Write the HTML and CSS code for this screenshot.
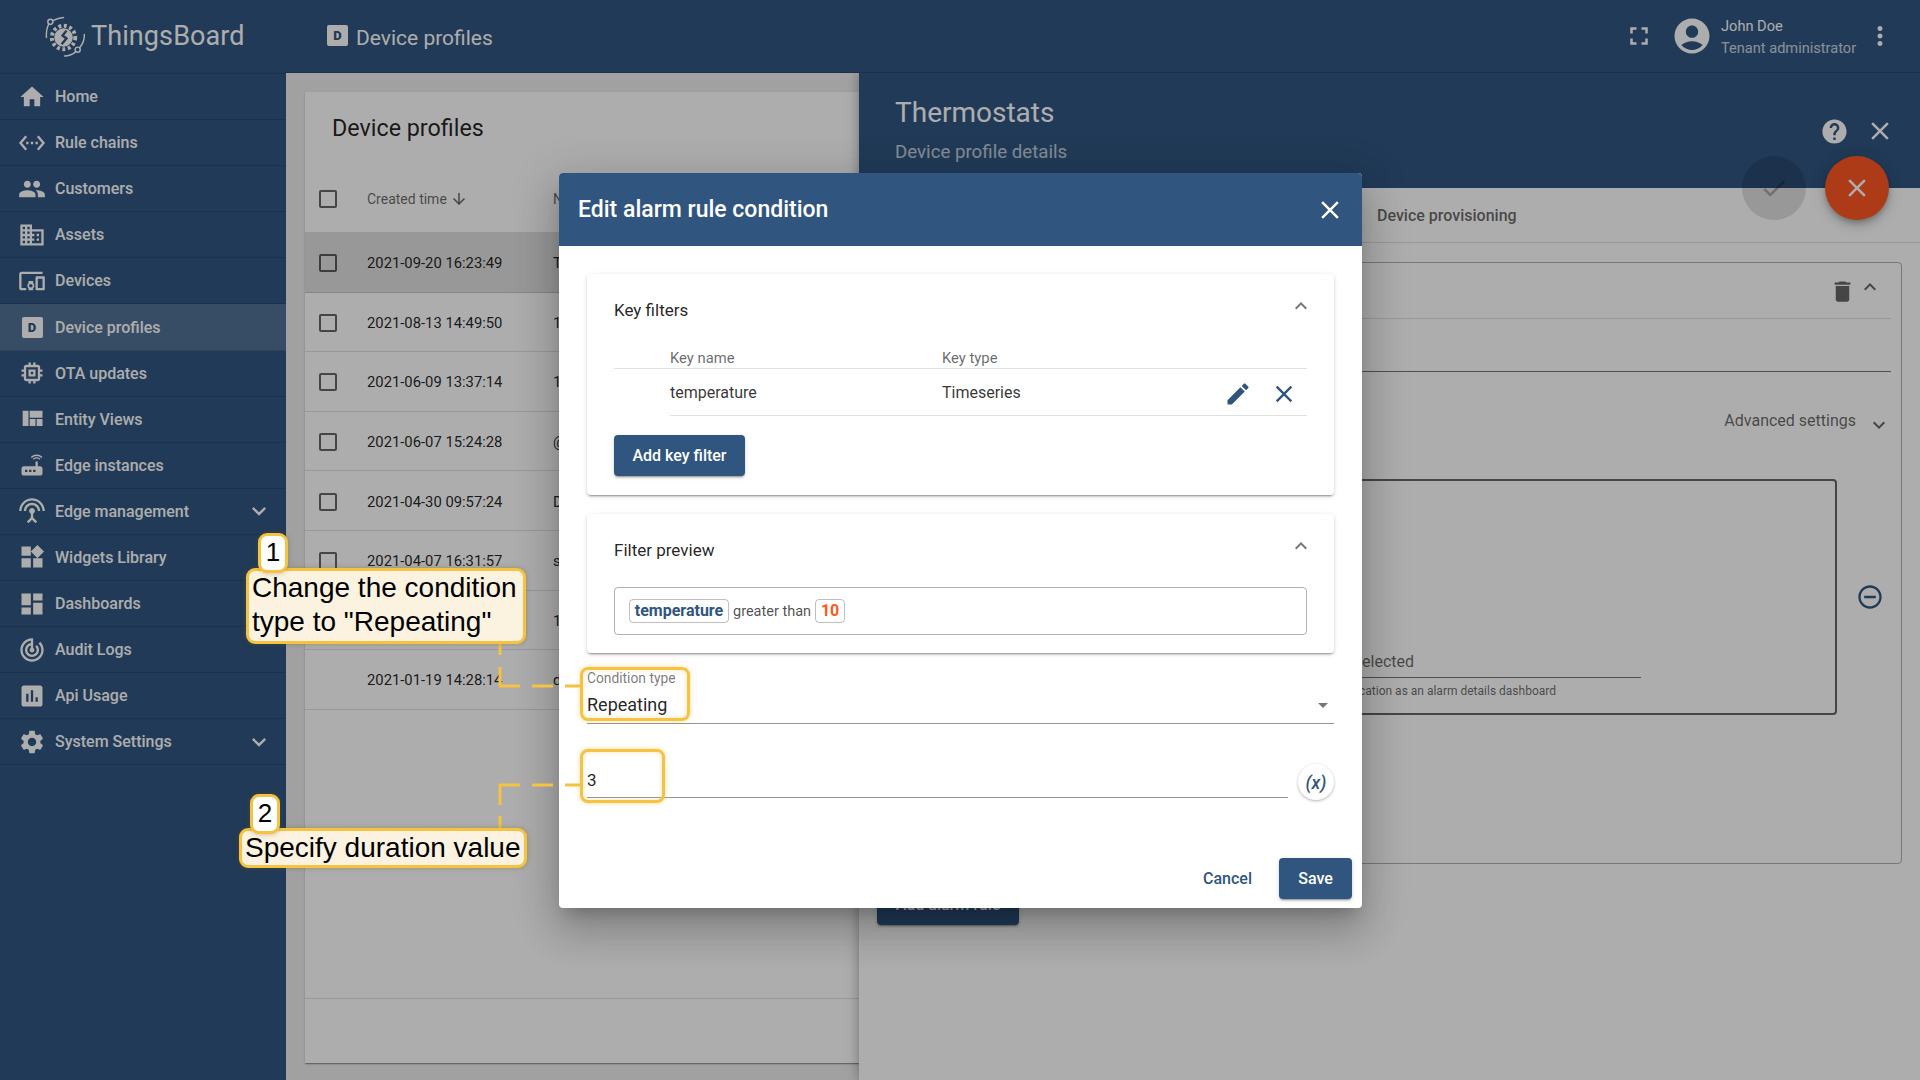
FILE: index.html
```html
<!DOCTYPE html>
<html lang="en">
<head>
    <meta charset="UTF-8">
    <title>ThingsBoard - Device profiles</title>
    <link rel="stylesheet" href="styles.css">
</head>
<body>
<div class="app">
    <aside class="sidebar">
        <div class="logo">
            <svg class="logo-mark" viewBox="0 0 42 42">
                <circle cx="19" cy="22" r="9.5" fill="#fff"/>
                <circle cx="19" cy="22" r="12" fill="none" stroke="#fff" stroke-width="4" stroke-dasharray="3 2.65"/>
                <path d="M22 15l-4 5 4 3-5 6" fill="none" stroke="#305680" stroke-width="2.4"/>
                <g fill="none" stroke="#fff" stroke-width="1.5" stroke-linecap="round">
                    <path d="M1.5 22C1 16 2.500 11 3.800 8.200"/>
                    <circle cx="5.500" cy="6" r="2.600"/>
                    <path d="M8 4.800C11.500 3 15 1.800 19 1.500"/>
                    <path d="M20 41C24 41 28 39.500 31 37"/>
                    <circle cx="33.500" cy="34.500" r="2.600"/>
                    <path d="M35.500 32.500C38.500 29 40.500 24 40.300 19"/>
                </g>
            </svg>
            <span class="logo-text">ThingsBoard</span>
        </div>
        <nav class="nav">
            <a class="nav-item"><svg class="icon" viewBox="0 0 24 24"><path d="M10 20v-6h4v6h5v-8h3L12 3 2 12h3v8z"/></svg>Home</a>
            <a class="nav-item"><svg class="icon" viewBox="0 0 24 24"><path d="M7.770 6.760L6.230 5.480.82 12l5.410 6.520 1.540-1.280L3.420 12l4.350-5.240zM7 13h2v-2H7v2zm10-2h-2v2h2v-2zm-6 2h2v-2h-2v2zm6.770-7.520l-1.540 1.280L20.580 12l-4.350 5.240 1.540 1.280L23.180 12l-5.410-6.520z"/></svg>Rule chains</a>
            <a class="nav-item"><svg class="icon" viewBox="0 0 24 24"><path d="M16 11c1.660 0 2.990-1.340 2.990-3S17.660 5 16 5c-1.660 0-3 1.340-3 3s1.340 3 3 3zm-8 0c1.660 0 2.990-1.340 2.990-3S9.660 5 8 5C6.340 5 5 6.340 5 8s1.340 3 3 3zm0 2c-2.330 0-7 1.170-7 3.500V19h14v-2.500c0-2.330-4.670-3.500-7-3.500zm8 0c-.29 0-.62.02-.97.05 1.160.84 1.970 1.970 1.970 3.450V19h6v-2.500c0-2.330-4.670-3.500-7-3.500z"/></svg>Customers</a>
            <a class="nav-item"><svg class="icon" viewBox="0 0 24 24"><path d="M12 7V3H2v18h20V7H12zM6 19H4v-2h2v2zm0-4H4v-2h2v2zm0-4H4V9h2v2zm0-4H4V5h2v2zm4 12H8v-2h2v2zm0-4H8v-2h2v2zm0-4H8V9h2v2zm0-4H8V5h2v2zm10 12h-8v-2h2v-2h-2v-2h2v-2h-2V9h8v10zm-2-8h-2v2h2v-2zm0 4h-2v2h2v-2z"/></svg>Assets</a>
            <a class="nav-item"><svg class="icon" viewBox="0 0 24 24"><path d="M3 6h18V4H3c-1.100 0-2 .9-2 2v12c0 1.100.9 2 2 2h4v-2H3V6zm10 6H9v1.780c-.61.55-1 1.330-1 2.220s.39 1.670 1 2.220V20h4v-1.780c.61-.55 1-1.340 1-2.220s-.39-1.670-1-2.220V12zm-2 5.500c-.83 0-1.500-.67-1.500-1.500s.67-1.500 1.500-1.500 1.500.67 1.500 1.500-.67 1.500-1.500 1.500zM22 8h-6c-.5 0-1 .5-1 1v10c0 .5.5 1 1 1h6c.5 0 1-.5 1-1V9c0-.5-.5-1-1-1zm-1 10h-4v-8h4v8z"/></svg>Devices</a>
            <a class="nav-item active"><span class="nav-d"><span class="d-tile">D</span></span>Device profiles</a>
            <a class="nav-item"><svg class="icon" viewBox="0 0 24 24"><path d="M15 9H9v6h6V9zm-2 4h-2v-2h2v2zm8-2V9h-2V7c0-1.100-.9-2-2-2h-2V3h-2v2h-2V3H9v2H7c-1.100 0-2 .9-2 2v2H3v2h2v2H3v2h2v2c0 1.100.9 2 2 2h2v2h2v-2h2v2h2v-2h2c1.100 0 2-.9 2-2v-2h2v-2h-2v-2h2zm-4 6H7V7h10v10z"/></svg>OTA updates</a>
            <a class="nav-item"><svg class="icon" viewBox="0 0 24 24"><path d="M10 18h5v-6h-5v6zm-6 0h5V5H4v13zm12 0h5v-6h-5v6zM10 5v6h11V5H10z"/></svg>Entity Views</a>
            <a class="nav-item"><svg class="icon" viewBox="0 0 24 24"><path d="M20.200 5.900l.8-.8C19.600 3.700 17.800 3 16 3s-3.600.7-5 2.100l.8.8C13 4.800 14.500 4.200 16 4.200s3 .6 4.200 1.700zm-.9.8c-.9-.9-2.100-1.400-3.300-1.400s-2.400.5-3.300 1.400l.8.8c.7-.7 1.600-1 2.500-1 .9 0 1.800.3 2.500 1l.8-.8zM19 13h-2V9h-2v4H5c-1.100 0-2 .9-2 2v4c0 1.100.9 2 2 2h14c1.100 0 2-.9 2-2v-4c0-1.100-.9-2-2-2zM8 18H6v-2h2v2zm3.500 0h-2v-2h2v2zm3.500 0h-2v-2h2v2z"/></svg>Edge instances</a>
            <a class="nav-item"><svg class="icon" viewBox="0 0 24 24"><path d="M12 5c-3.870 0-7 3.130-7 7h2c0-2.760 2.240-5 5-5s5 2.240 5 5h2c0-3.870-3.130-7-7-7zm1 9.290c.88-.39 1.500-1.260 1.500-2.290 0-1.380-1.120-2.500-2.500-2.500S9.500 10.620 9.500 12c0 1.020.62 1.900 1.500 2.290v3.300L7.590 21 9 22.410l3-3 3 3L16.410 21 13 17.590v-3.300zM12 1C5.930 1 1 5.930 1 12h2c0-4.970 4.030-9 9-9s9 4.030 9 9h2c0-6.070-4.930-11-11-11z"/></svg>Edge management<svg class="icon nav-arrow" viewBox="0 0 24 24"><path d="M16.590 8.590L12 13.170 7.410 8.590 6 10l6 6 6-6z"/></svg></a>
            <a class="nav-item"><svg class="icon" viewBox="0 0 24 24"><path d="M13 13v8h8v-8h-8zM3 21h8v-8H3v8zM3 3v8h8V3H3zm13.660-1.310L11 7.340 16.660 13l5.660-5.660-5.660-5.650z"/></svg>Widgets Library</a>
            <a class="nav-item"><svg class="icon" viewBox="0 0 24 24"><path d="M3 13h8V3H3v10zm0 8h8v-6H3v6zm10 0h8V11h-8v10zm0-18v6h8V3h-8z"/></svg>Dashboards</a>
            <a class="nav-item"><svg class="icon" viewBox="0 0 24 24"><path d="M19.070 4.930l-1.410 1.410C19.100 7.790 20 9.790 20 12c0 4.420-3.580 8-8 8s-8-3.580-8-8c0-4.080 3.050-7.440 7-7.930v2.020C8.160 6.570 6 9.030 6 12c0 3.310 2.690 6 6 6s6-2.690 6-6c0-1.660-.67-3.160-1.760-4.240l-1.410 1.410C15.550 9.900 16 10.900 16 12c0 2.210-1.790 4-4 4s-4-1.790-4-4c0-1.860 1.280-3.410 3-3.860v2.140c-.6.35-1 .98-1 1.720 0 1.100.9 2 2 2s2-.9 2-2c0-.74-.4-1.380-1-1.720V2h-1C6.480 2 2 6.480 2 12s4.480 10 10 10 10-4.480 10-10c0-2.760-1.120-5.260-2.930-7.070z"/></svg>Audit Logs</a>
            <a class="nav-item"><svg class="icon" viewBox="0 0 24 24"><path d="M19 3H5c-1.100 0-2 .9-2 2v14c0 1.100.9 2 2 2h14c1.100 0 2-.9 2-2V5c0-1.100-.9-2-2-2zM9 17H7v-7h2v7zm4 0h-2V7h2v10zm4 0h-2v-4h2v4z"/></svg>Api Usage</a>
            <a class="nav-item"><svg class="icon" viewBox="0 0 24 24"><path d="M19.140 12.940c.04-.3.06-.61.06-.94 0-.32-.02-.64-.07-.94l2.030-1.580c.18-.14.23-.41.12-.61l-1.920-3.320c-.12-.22-.37-.29-.59-.22l-2.390.96c-.5-.38-1.030-.7-1.620-.94l-.36-2.540c-.04-.24-.24-.41-.48-.41h-3.840c-.24 0-.43.17-.47.41l-.36 2.540c-.59.24-1.130.57-1.620.94l-2.390-.96c-.22-.08-.47 0-.59.22L2.740 8.870c-.12.21-.08.47.12.61l2.030 1.580c-.05.3-.09.63-.09.94s.02.64.07.94l-2.030 1.580c-.18.14-.23.41-.12.61l1.920 3.320c.12.22.37.29.59.22l2.390-.96c.5.38 1.030.7 1.620.94l.36 2.540c.05.24.24.41.48.41h3.840c.24 0 .44-.17.47-.41l.36-2.540c.59-.24 1.130-.56 1.620-.94l2.390.96c.22.08.47 0 .59-.22l1.920-3.320c.12-.22.07-.47-.12-.61l-2.010-1.580zM12 15.600c-1.980 0-3.600-1.620-3.600-3.600s1.620-3.600 3.600-3.600 3.600 1.620 3.600 3.600-1.620 3.600-3.600 3.600z"/></svg>System Settings<svg class="icon nav-arrow" viewBox="0 0 24 24"><path d="M16.590 8.590L12 13.170 7.410 8.590 6 10l6 6 6-6z"/></svg></a>
        </nav>
    </aside>

    <div class="main">
        <header class="topbar">
            <span class="d-tile d-tile-top">D</span>
            <span class="topbar-title">Device profiles</span>
            <div class="topbar-right">
                <svg class="icon icon-30" viewBox="0 0 24 24"><path d="M7 14H5v5h5v-2H7v-3zm-2-4h2V7h3V5H5v5zm12 7h-3v2h5v-5h-2v3zM14 5v2h3v3h2V5h-5z"/></svg>
                <svg class="icon avatar" viewBox="0 0 24 24"><path d="M12 2C6.480 2 2 6.480 2 12s4.480 10 10 10 10-4.480 10-10S17.520 2 12 2zm0 4c1.930 0 3.500 1.570 3.500 3.500S13.930 13 12 13s-3.500-1.570-3.500-3.500S10.070 6 12 6zm0 14c-2.030 0-4.430-.82-6.140-2.880C7.550 15.800 9.680 15 12 15s4.450.8 6.140 2.120C16.430 19.180 14.030 20 12 20z"/></svg>
                <div class="user">
                    <div class="user-name">John Doe</div>
                    <div class="user-role">Tenant administrator</div>
                </div>
                <svg class="icon icon-30" viewBox="0 0 24 24"><path d="M12 8c1.100 0 2-.9 2-2s-.9-2-2-2-2 .9-2 2 .9 2 2 2zm0 2c-1.100 0-2 .9-2 2s.9 2 2 2 2-.9 2-2-.9-2-2-2zm0 6c-1.100 0-2 .9-2 2s.9 2 2 2 2-.9 2-2-.9-2-2-2z"/></svg>
            </div>
        </header>

        <div class="content">
            <section class="list-area">
                <div class="list-card">
                    <h2 class="list-title">Device profiles</h2>
                    <div class="row row-head">
                        <span class="checkbox"></span>
                        <span class="cell-time">Created time <svg class="sort" viewBox="0 0 24 24"><path d="M20 12l-1.410-1.410L13 16.170V4h-2v12.170l-5.580-5.590L4 12l8 8 8-8z"/></svg></span>
                        <span class="cell-name">N</span>
                    </div>
                    <div class="row selected"><span class="checkbox"></span><span class="cell-time">2021-09-20 16:23:49</span><span class="cell-name">T</span></div>
                    <div class="row"><span class="checkbox"></span><span class="cell-time">2021-08-13 14:49:50</span><span class="cell-name">1</span></div>
                    <div class="row"><span class="checkbox"></span><span class="cell-time">2021-06-09 13:37:14</span><span class="cell-name">1</span></div>
                    <div class="row"><span class="checkbox"></span><span class="cell-time">2021-06-07 15:24:28</span><span class="cell-name">@</span></div>
                    <div class="row"><span class="checkbox"></span><span class="cell-time">2021-04-30 09:57:24</span><span class="cell-name">D</span></div>
                    <div class="row"><span class="checkbox"></span><span class="cell-time">2021-04-07 16:31:57</span><span class="cell-name">s</span></div>
                    <div class="row"><span class="checkbox"></span><span class="cell-time"></span><span class="cell-name">1</span></div>
                    <div class="row"><span class="checkbox checkbox-off"></span><span class="cell-time">2021-01-19 14:28:14</span><span class="cell-name">d</span></div>
                    <div class="list-footer"></div>
                </div>
            </section>

            <section class="panel">
                <div class="panel-head">
                    <div>
                        <div class="panel-title">Thermostats</div>
                        <div class="panel-sub">Device profile details</div>
                    </div>
                    <div class="panel-actions">
                        <svg class="icon help" viewBox="0 0 24 24"><path d="M12 2C6.480 2 2 6.480 2 12s4.480 10 10 10 10-4.480 10-10S17.520 2 12 2zm1 17h-2v-2h2v2zm2.070-7.750l-.9.92C13.450 12.900 13 13.500 13 15h-2v-.5c0-1.100.45-2.100 1.170-2.830l1.240-1.260c.37-.36.59-.86.59-1.410 0-1.100-.9-2-2-2s-2 .9-2 2H8c0-2.210 1.790-4 4-4s4 1.790 4 4c0 .88-.36 1.680-.93 2.250z"/></svg>
                        <svg class="icon icon-30" viewBox="0 0 24 24"><path d="M19 6.410L17.590 5 12 10.590 6.410 5 5 6.410 10.590 12 5 17.590 6.410 19 12 13.410 17.590 19 19 17.590 13.410 12z"/></svg>
                    </div>
                </div>
                <div class="fabs">
                    <span class="fab fab-off"><svg class="icon" viewBox="0 0 24 24"><path d="M9 16.170L4.830 12l-1.420 1.410L9 19 21 7l-1.410-1.410z"/></svg></span>
                    <span class="fab fab-close"><svg class="icon" viewBox="0 0 24 24"><path d="M19 6.410L17.590 5 12 10.590 6.410 5 5 6.410 10.590 12 5 17.590 6.410 19 12 13.410 17.590 19 19 17.590 13.410 12z"/></svg></span>
                </div>
                <div class="tabs"><span class="tab">Device provisioning</span></div>
                <div class="panel-body">
                    <div class="rule-box">
                        <div class="rule-head">
                            <svg class="icon trash" viewBox="0 0 24 24"><path d="M6 19c0 1.100.9 2 2 2h8c1.100 0 2-.9 2-2V7H6v12zM19 4h-3.500l-1-1h-5l-1 1H5v2h14V4z"/></svg>
                            <svg class="icon chevron" viewBox="0 0 24 24"><path d="M12 8l-6 6 1.410 1.410L12 10.830l4.590 4.580L18 14z"/></svg>
                        </div>
                        <div class="rule-field"></div>
                        <div class="advanced">Advanced settings<svg class="icon chevron" viewBox="0 0 24 24"><path d="M16.590 8.590L12 13.170 7.410 8.590 6 10l6 6 6-6z"/></svg></div>
                        <div class="rule-row">
                            <div class="rule-inner">
                                <div class="dash-field">No dashboard selected</div>
                                <div class="dash-hint">Dashboard used for the notification as an alarm details dashboard</div>
                            </div>
                            <svg class="icon minus" viewBox="0 0 24 24"><path d="M7 11v2h10v-2H7zm5-9C6.480 2 2 6.480 2 12s4.480 10 10 10 10-4.480 10-10S17.520 2 12 2zm0 18c-4.410 0-8-3.590-8-8s3.590-8 8-8 8 3.590 8 8-3.590 8-8 8z"/></svg>
                        </div>
                    </div>
                    <div class="btn add-alarm">Add alarm rule</div>
                </div>
            </section>
        </div>
    </div>
</div>

<div class="backdrop"></div>

<div class="dialog">
    <div class="dialog-head">
        <span class="dialog-title">Edit alarm rule condition</span>
        <svg class="icon icon-30" viewBox="0 0 24 24"><path d="M19 6.410L17.590 5 12 10.590 6.410 5 5 6.410 10.590 12 5 17.590 6.410 19 12 13.410 17.590 19 19 17.590 13.410 12z"/></svg>
    </div>
    <div class="dialog-body">
        <div class="card card-keys">
            <div class="card-head">
                <span>Key filters</span>
                <svg class="icon chevron" viewBox="0 0 24 24"><path d="M12 8l-6 6 1.410 1.410L12 10.830l4.590 4.580L18 14z"/></svg>
            </div>
            <div class="key-head"><span class="key-col1">Key name</span><span>Key type</span></div>
            <div class="key-row">
                <span class="key-name">temperature</span>
                <span class="key-type">Timeseries</span>
                <svg class="icon key-btn" viewBox="0 0 24 24"><path d="M3 17.250V21h3.750L17.810 9.940l-3.750-3.750L3 17.250zM20.710 7.040c.39-.39.39-1.020 0-1.410l-2.340-2.340c-.39-.39-1.020-.39-1.410 0l-1.830 1.830 3.750 3.750 1.830-1.830z"/></svg>
                <svg class="icon key-btn" viewBox="0 0 24 24"><path d="M19 6.410L17.590 5 12 10.590 6.410 5 5 6.410 10.590 12 5 17.590 6.410 19 12 13.410 17.590 19 19 17.590 13.410 12z"/></svg>
            </div>
            <div class="btn add-key">Add key filter</div>
        </div>
        <div class="card card-preview">
            <div class="card-head">
                <span>Filter preview</span>
                <svg class="icon chevron" viewBox="0 0 24 24"><path d="M12 8l-6 6 1.410 1.410L12 10.830l4.590 4.580L18 14z"/></svg>
            </div>
            <div class="preview">
                <span class="chip chip-key">temperature</span>
                <span class="preview-op">greater than</span>
                <span class="chip chip-val">10</span>
            </div>
        </div>
        <div class="field field-select">
            <div class="field-label">Condition type</div>
            <div class="field-value">Repeating</div>
            <span class="select-arrow"></span>
        </div>
        <div class="duration">
            <div class="field field-input"><div class="field-value">3</div></div>
            <span class="var-btn">(x)</span>
        </div>
    </div>
    <div class="dialog-actions">
        <span class="btn-text">Cancel</span>
        <span class="btn save">Save</span>
    </div>
</div>

<!-- annotations on top of the screenshot -->
<svg class="anno-lines" viewBox="0 0 1920 1080">
    <path d="M500 644V655M500 667V686H520M532 686H553M565 686H581"/>
    <path d="M500 829V816M500 805V785H520M532 785H553M565 785H581"/>
</svg>
<div class="anno-mark anno-mark-1"></div>
<div class="anno-mark anno-mark-2"></div>
<div class="anno-num anno-num-1">1</div>
<div class="anno-text anno-text-1">Change the condition<br>type to "Repeating"</div>
<div class="anno-num anno-num-2">2</div>
<div class="anno-text anno-text-2">Specify duration value</div>
</body>
</html>
```

FILE: styles.css
```css
* {
    box-sizing: border-box;
}

body {
    margin: 0;
    width: 1920px;
    height: 1080px;
    overflow: hidden;
    position: relative;
    background: #eeeeee;
    font-family: Roboto, "Liberation Sans", sans-serif;
    color: rgba(0, 0, 0, 0.87);
}

.icon {
    width: 24px;
    height: 24px;
    fill: currentColor;
    flex: none;
    display: block;
}

.icon-30 {
    width: 30px;
    height: 30px;
}

.app {
    display: flex;
    height: 1080px;
}

/* sidebar */
.sidebar {
    width: 286px;
    flex: none;
    background: #305680;
    color: #fff;
    z-index: 2;
}

.logo {
    height: 73px;
    display: flex;
    align-items: center;
    padding-left: 45px;
    gap: 5px;
}

.logo-mark {
    width: 41px;
    height: 41px;
    margin-top: -1px;
    flex: none;
}

.logo-text {
    font-size: 27px;
    font-weight: 400;
    letter-spacing: 0.1px;
    margin-top: -1px;
}

.nav {
    border-top: 1px solid rgba(0, 0, 0, 0.12);
}

.nav-item {
    height: 46.1px;
    display: flex;
    align-items: center;
    padding: 0 13px 0 18px;
    gap: 9px;
    font-size: 16px;
    font-weight: 500;
    border-bottom: 1px solid rgba(0, 0, 0, 0.12);
}

.nav-item .icon {
    width: 28px;
    height: 28px;
}

.nav-item.active {
    background: rgba(255, 255, 255, 0.17);
}

.nav-item .nav-arrow {
    margin-left: auto;
}

.nav-d {
    width: 28px;
    display: flex;
    justify-content: center;
}

.d-tile {
    width: 21px;
    height: 21px;
    border-radius: 2px;
    background: #fff;
    color: #305680;
    font-size: 13px;
    font-weight: 900;
    line-height: 21px;
    text-align: center;
    display: block;
}

/* top bar */
.main {
    flex: 1;
    min-width: 0;
    display: flex;
    flex-direction: column;
}

.topbar {
    height: 73px;
    flex: none;
    background: #305680;
    color: #fff;
    display: flex;
    align-items: center;
    padding: 0 25px 0 41px;
    border-bottom: 1px solid rgba(0, 0, 0, 0.15);
    z-index: 1;
}

.d-tile-top {
    margin-right: 8px;
    margin-top: -2px;
}

.topbar-title {
    font-size: 21px;
    margin-top: 3px;
}

.topbar-right {
    margin-left: auto;
    display: flex;
    align-items: center;
}

.avatar {
    width: 42px;
    height: 42px;
    margin: 0 8px 0 17px;
}

.user {
    width: 144px;
    font-size: 14.6px;
    line-height: 22px;
    padding-top: 1px;
}

.user-role {
    opacity: 0.75;
}

/* list */
.content {
    flex: 1;
    display: flex;
    min-height: 0;
}

.list-area {
    width: 573px;
    flex: none;
    padding: 19px 0 0 19px;
    overflow: hidden;
}

.list-card {
    width: 700px;
    height: 971px;
    background: #fff;
    box-shadow: 0 2px 1px -1px rgba(0, 0, 0, 0.2), 0 1px 1px rgba(0, 0, 0, 0.14), 0 1px 3px rgba(0, 0, 0, 0.12);
    display: flex;
    flex-direction: column;
}

.list-title {
    margin: 0;
    height: 71px;
    padding: 21px 0 0 27px;
    font-size: 23.3px;
    font-weight: 400;
    line-height: 30px;
}

.row {
    height: 59.6px;
    flex: none;
    display: flex;
    align-items: center;
    padding: 2px 0 0 14px;
    font-size: 14.8px;
    border-bottom: 1px solid rgba(0, 0, 0, 0.12);
}

.row-head {
    height: 70px;
    font-size: 14px;
    color: rgba(0, 0, 0, 0.6);
}

.row.selected {
    background: #e0e0e0;
}

.checkbox {
    width: 18px;
    height: 18px;
    border: 2px solid rgba(0, 0, 0, 0.6);
    border-radius: 2px;
    flex: none;
}

.checkbox-off {
    visibility: hidden;
}

.cell-time {
    margin-left: 30px;
    width: 186px;
    display: flex;
    align-items: center;
    gap: 4px;
}

.row-head .cell-time {
    gap: 3px;
}

.sort {
    width: 18px;
    height: 18px;
    fill: currentColor;
}

.list-footer {
    margin-top: 288px;
    border-top: 1px solid rgba(0, 0, 0, 0.12);
}

/* details panel */
.panel {
    flex: 1;
    min-width: 0;
    position: relative;
    background: #fff;
    box-shadow: 0 0 12px rgba(0, 0, 0, 0.35);
}

.panel-head {
    height: 115px;
    background: #305680;
    color: #fff;
    display: flex;
    justify-content: space-between;
    padding: 22px 25px 0 36px;
}

.panel-title {
    font-size: 28px;
    line-height: 36px;
}

.panel-sub {
    font-size: 18.7px;
    line-height: 24px;
    margin-top: 9px;
    opacity: 0.7;
}

.panel-actions {
    display: flex;
    align-items: center;
    gap: 16px;
    height: 32px;
    margin-top: 20px;
}

.help {
    width: 29px;
    height: 29px;
}

.fabs {
    position: absolute;
    top: 83px;
    right: 31px;
    display: flex;
    gap: 19px;
}

.fab {
    width: 64px;
    height: 64px;
    border-radius: 50%;
    display: flex;
    align-items: center;
    justify-content: center;
}

.fab .icon {
    width: 30px;
    height: 30px;
}

.fab-off {
    background: rgba(0, 0, 0, 0.12);
    color: rgba(0, 0, 0, 0.26);
}

.fab-close {
    background: #ff5722;
    color: #fff;
    box-shadow: 0 3px 5px -1px rgba(0, 0, 0, 0.2), 0 6px 10px rgba(0, 0, 0, 0.14), 0 1px 18px rgba(0, 0, 0, 0.12);
}

.tabs {
    height: 55px;
    border-bottom: 1px solid rgba(0, 0, 0, 0.12);
    padding: 0 0 0 518px;
    display: flex;
    align-items: center;
    font-size: 16px;
    font-weight: 500;
    color: rgba(0, 0, 0, 0.6);
}

.panel-body {
    padding: 19px 18px 0;
}

.rule-box {
    height: 602px;
    border: 1px solid rgba(0, 0, 0, 0.3);
    border-radius: 4px;
    padding: 0 10px 0 0;
}

.rule-head {
    height: 56px;
    display: flex;
    justify-content: flex-end;
    align-items: center;
    gap: 2px;
    color: rgba(0, 0, 0, 0.6);
    border-bottom: 1px solid rgba(0, 0, 0, 0.12);
}

.trash {
    width: 27px;
    height: 27px;
    margin-top: 1px;
}

.chevron {
    color: rgba(0, 0, 0, 0.6);
}

.rule-head .chevron {
    margin: -7px 9px 0 0;
}

.rule-field {
    height: 53px;
    border-bottom: 1px solid rgba(0, 0, 0, 0.54);
}

.advanced {
    height: 107px;
    padding-top: 34px;
    display: flex;
    justify-content: flex-end;
    gap: 11px;
    font-size: 16px;
    line-height: 30px;
    color: rgba(0, 0, 0, 0.6);
}

.advanced .chevron {
    margin: 7px 0 0 0;
}

.rule-row {
    display: flex;
    align-items: center;
    height: 236px;
}

.rule-inner {
    width: 959px;
    height: 236px;
    border: 2px solid rgba(0, 0, 0, 0.6);
    border-radius: 4px;
    padding: 167px 0 0 0;
}

.dash-field {
    width: 761px;
    height: 30px;
    border-bottom: 1px solid rgba(0, 0, 0, 0.54);
    font-size: 16px;
    line-height: 28px;
    color: rgba(0, 0, 0, 0.6);
    padding-right: 227px;
    text-align: right;
    white-space: nowrap;
}

.dash-hint {
    width: 762px;
    font-size: 12px;
    line-height: 26px;
    color: rgba(0, 0, 0, 0.6);
    padding-right: 86px;
    text-align: right;
    white-space: nowrap;
}

.minus {
    width: 28px;
    height: 28px;
    margin-left: 19px;
    color: #305680;
}

.btn {
    background: #305680;
    color: #fff;
    border-radius: 4px;
    font-weight: 500;
    display: flex;
    align-items: center;
    justify-content: center;
    box-shadow: 0 3px 1px -2px rgba(0, 0, 0, 0.2), 0 2px 2px rgba(0, 0, 0, 0.14), 0 1px 5px rgba(0, 0, 0, 0.12);
}

.add-alarm {
    width: 142px;
    height: 41px;
    margin-top: 20px;
    font-size: 16px;
}

/* backdrop and dialog */
.backdrop {
    position: absolute;
    inset: 0;
    background: rgba(0, 0, 0, 0.32);
    z-index: 5;
}

.dialog {
    position: absolute;
    left: 559px;
    top: 173px;
    width: 803px;
    height: 735px;
    background: #fff;
    border-radius: 4px;
    z-index: 6;
    overflow: hidden;
    display: flex;
    flex-direction: column;
    box-shadow: 0 11px 15px -7px rgba(0, 0, 0, 0.2), 0 24px 38px 3px rgba(0, 0, 0, 0.14), 0 9px 46px 8px rgba(0, 0, 0, 0.12);
}

.dialog-head {
    height: 73px;
    flex: none;
    background: #305680;
    color: #fff;
    display: flex;
    align-items: center;
    justify-content: space-between;
    padding: 0 17px 0 19px;
}

.dialog-title {
    font-size: 23px;
    font-weight: 500;
}

.dialog-body {
    flex: 1;
    padding: 28px 28px 0;
}

.card {
    background: #fff;
    border-radius: 4px;
    box-shadow: 0 3px 1px -2px rgba(0, 0, 0, 0.2), 0 2px 2px rgba(0, 0, 0, 0.14), 0 1px 5px rgba(0, 0, 0, 0.12);
    padding: 0 27px;
}

.card-keys {
    height: 221px;
}

.card-preview {
    height: 139px;
    margin-top: 19px;
}

.card-head {
    height: 72px;
    display: flex;
    justify-content: space-between;
    align-items: center;
    font-size: 17px;
    color: rgba(0, 0, 0, 0.87);
}

.card-head .chevron {
    margin: -8px -6px 0 0;
    color: rgba(0, 0, 0, 0.54);
}

.key-head {
    height: 23px;
    display: flex;
    padding-left: 56px;
    font-size: 14.8px;
    line-height: 24px;
    color: rgba(0, 0, 0, 0.6);
    border-bottom: 1px solid rgba(0, 0, 0, 0.12);
}

.key-col1 {
    width: 272px;
}

.key-row {
    margin-left: 56px;
    height: 47px;
    display: flex;
    align-items: center;
    font-size: 16px;
    border-bottom: 1px solid rgba(0, 0, 0, 0.12);
    color: rgba(0, 0, 0, 0.8);
}

.key-name {
    width: 272px;
}

.key-type {
    flex: 1;
}

.key-btn {
    width: 28px;
    height: 28px;
    color: #305680;
    margin: 3px 9px 0 9px;
}

.add-key {
    width: 131px;
    height: 41px;
    margin-top: 19px;
    font-size: 16px;
}

.preview {
    height: 48px;
    margin-top: 1px;
    border: 1px solid rgba(0, 0, 0, 0.3);
    border-radius: 4px;
    display: flex;
    align-items: center;
    padding-left: 14px;
    gap: 4px;
}

.chip {
    height: 24px;
    border: 1px solid rgba(0, 0, 0, 0.25);
    border-radius: 4px;
    display: flex;
    align-items: center;
    justify-content: center;
    font-weight: 700;
    font-size: 16px;
    padding-bottom: 2px;
}

.chip-key {
    width: 100px;
    color: #305680;
}

.chip-val {
    width: 30px;
    color: #ff5722;
}

.preview-op {
    font-size: 14.5px;
    color: rgba(0, 0, 0, 0.7);
}

.field {
    border-bottom: 1px solid rgba(0, 0, 0, 0.42);
    position: relative;
}

.field-select {
    height: 57px;
    margin-top: 14px;
    padding-top: 3px;
}

.field-label {
    font-size: 13.8px;
    line-height: 17px;
    color: rgba(0, 0, 0, 0.54);
}

.field-value {
    font-size: 18px;
    line-height: 26px;
    margin-top: 5px;
}

.select-arrow {
    position: absolute;
    right: 6px;
    top: 36px;
    border-left: 5px solid transparent;
    border-right: 5px solid transparent;
    border-top: 5px solid rgba(0, 0, 0, 0.54);
}

.duration {
    display: flex;
    justify-content: space-between;
    margin-top: 17px;
}

.field-input {
    width: 701px;
    height: 57px;
    padding-top: 29px;
}

.field-input .field-value {
    margin-top: 0;
    font-size: 17px;
    line-height: 20px;
}

.var-btn {
    width: 36px;
    height: 36px;
    margin-top: 23px;
    border-radius: 50%;
    box-shadow: 0 1px 3px rgba(0, 0, 0, 0.3);
    color: #305680;
    font-size: 18px;
    font-weight: 500;
    font-style: italic;
    display: flex;
    align-items: center;
    justify-content: center;
}

.dialog-actions {
    display: flex;
    justify-content: flex-end;
    align-items: center;
    gap: 27px;
    padding: 0 10px 9px 0;
}

.btn-text {
    font-size: 16px;
    font-weight: 500;
    color: #305680;
}

.save {
    width: 73px;
    height: 41px;
    font-size: 16px;
}

/* annotations */
.anno-lines {
    position: absolute;
    left: 0;
    top: 0;
    width: 1920px;
    height: 1080px;
    z-index: 7;
    fill: none;
    stroke: #f5c242;
    stroke-width: 3;
}

.anno-mark {
    position: absolute;
    z-index: 8;
    border: 3px solid #f5c242;
    border-radius: 8px;
    box-shadow: 0 0 5px rgba(245, 194, 66, 0.5), inset 0 0 5px rgba(245, 194, 66, 0.4);
}

.anno-mark-1 {
    left: 580px;
    top: 667px;
    width: 110px;
    height: 54px;
}

.anno-mark-2 {
    left: 580px;
    top: 749px;
    width: 85px;
    height: 54px;
}

.anno-num,
.anno-text {
    position: absolute;
    z-index: 8;
    border: 3px solid #f5c242;
    border-radius: 9px;
    font-family: "Liberation Sans", Arial, sans-serif;
    color: #000;
    box-shadow: 0 0 5px rgba(120, 90, 20, 0.4);
}

.anno-num {
    background: #fff;
    width: 30px;
    height: 40px;
    font-size: 26px;
    line-height: 33px;
    text-align: center;
    z-index: 9;
}

.anno-num-1 {
    left: 258px;
    top: 533px;
}

.anno-num-2 {
    left: 250px;
    top: 794px;
}

.anno-text {
    background: #fbf2e0;
    font-size: 28px;
    line-height: 34px;
    white-space: nowrap;
}

.anno-text-1 {
    left: 246px;
    top: 568px;
    width: 280px;
    height: 76px;
    padding: 0 0 0 3px;
}

.anno-text-2 {
    left: 239px;
    top: 828px;
    width: 288px;
    height: 40px;
    padding: 0 0 0 3px;
}
```
